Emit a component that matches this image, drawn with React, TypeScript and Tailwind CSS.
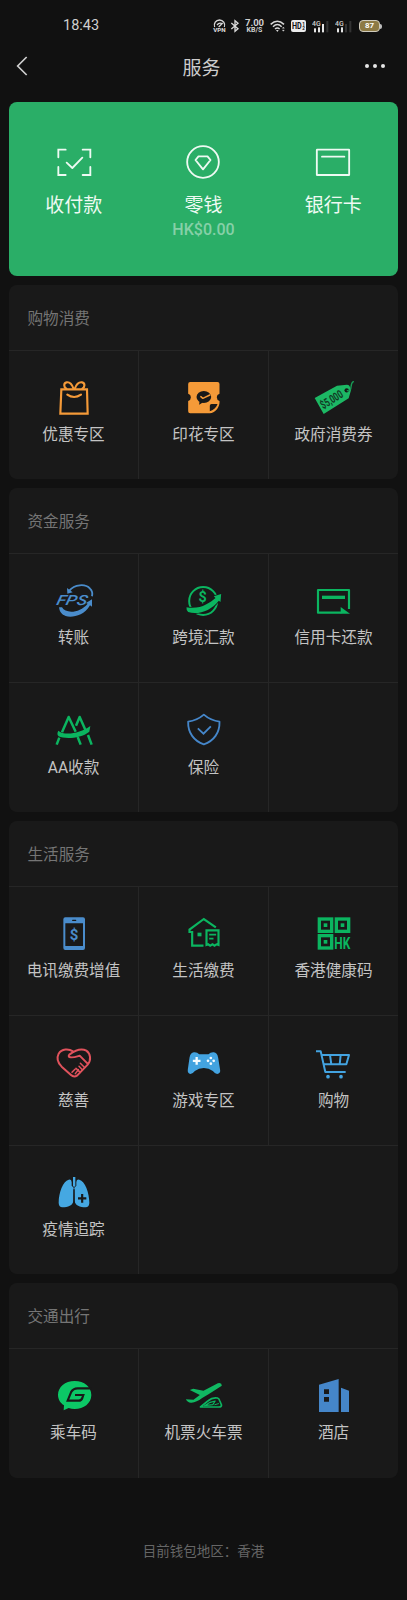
import type { ReactNode } from "react";

const BLUE = "#4586c9";
const SKY = "#43a3e0";
const GREEN = "#0bb560";
const ORANGE = "#f59a38";
const DARK = "#191919";
const FONT = "Roboto, 'Noto Sans CJK SC', sans-serif";

function Icon({ x, y, children }: { x: number; y: number; children: ReactNode }) {
  return (
    <svg
      className="block h-10 w-11 shrink-0 overflow-visible"
      viewBox={`${x} ${y} 132 120`}
      fill="none"
      strokeLinecap="round"
      strokeLinejoin="round"
    >
      {children}
    </svg>
  );
}

const PayIcon = () => (
  <Icon x={155} y={139}>
    <g stroke="#eefaf3" strokeWidth="5.500">
      <path d="M174 185V162H196M247 162H270V185M270 214V238H247M196 238H174V214" strokeLinejoin="miter" />
      <path d="M199 201L216 217L246 186" />
    </g>
  </Icon>
);

const ChangeIcon = () => (
  <Icon x={544.5} y={139}>
    <g stroke="#eefaf3" strokeWidth="5.500">
      <circle cx="610.5" cy="199" r="47.5" />
      <path d="M597 182H624L633 193L610.500 221L588 193Z" />
    </g>
  </Icon>
);

const CardIcon = () => (
  <Icon x={933} y={139}>
    <g stroke="#eefaf3" strokeWidth="5.500">
      <rect x="950.5" y="162" width="97" height="76" rx="1" />
      <path d="M966 183H1033" />
    </g>
  </Icon>
);

const BagIcon = () => (
  <Icon x={155} y={291}>
    <g stroke={ORANGE} strokeWidth="6.500">
      <path d="M183 325H260L262 398H180Z" strokeLinejoin="miter" />
      <path d="M201 341Q221 355 242 341" />
      <path d="M220 324C215 310 206 303 199 304C189 306 190 318 198 323M223 324C228 310 237 303 245 304C255 306 254 318 246 323" />
    </g>
  </Icon>
);

const StampIcon = () => (
  <Icon x={544.5} y={291}>
    <path
      fill={ORANGE}
      d="M569 303H651Q657 303 657 309V338A11.500 11.500 0 0 0 657 360V366C655 382 643 395 628 397H569Q563 397 563 391V360A11.500 11.500 0 0 0 563 338V309Q563 303 569 303Z"
    />
    <ellipse cx="610" cy="348" rx="22" ry="18" fill={DARK} />
    <path d="M597 360L596 371L608 364Z" fill={DARK} />
    <path d="M601 347L607 352L628 342" stroke={ORANGE} strokeWidth="4.500" />
    <path d="M628 391V374Q628 369 633 369H651Q647 384 628 391Z" fill={DARK} />
  </Icon>
);

const VoucherIcon = () => (
  <Icon x={933} y={291}>
    <path fill="#1cb864" d="M941 351L1008 314L1038 311Q1045 311 1047 318L1050 328L1043 352L968 399Z" />
    <circle cx="1037" cy="328" r="6.500" fill={DARK} />
    <path d="M1039 329C1057 333 1044 309 1057 302" stroke="#179c55" strokeWidth="4" />
    <text
      transform="translate(967 385) rotate(-32)"
      fill="#123a24"
      fontFamily="Roboto"
      fontWeight="700"
      fontSize="35"
      textLength="73"
      lengthAdjust="spacingAndGlyphs"
    >
      $5,000
    </text>
  </Icon>
);

const FpsIcon = () => (
  <Icon x={155} y={285}>
    <path d="M207 314C222 295 255 292 269 308C276 315 277 323 275 331" stroke="#4a8ccb" strokeWidth="5.500" strokeLinecap="butt" />
    <path d="M200 306L201 323L217 319Z" fill="#4a8ccb" />
    <path
      fill="#4a8ccb"
      d="M176 364H185C196 384 238 382 262 353L257 351L275 340V362L269 358C250 392 212 395 196 390C184 386 178 378 176 364Z"
    />
    <text
      transform="translate(166 358) skewX(-14)"
      fill="#4a8ccb"
      fontFamily="Roboto"
      fontStyle="italic"
      fontWeight="500"
      fontSize="42"
      textLength="92"
      lengthAdjust="spacingAndGlyphs"
    >
      FPS
    </text>
  </Icon>
);

const RemitIcon = () => (
  <Icon x={544.5} y={285}>
    <circle cx="608" cy="345" r="42" stroke={GREEN} strokeWidth="6" />
    <path
      fill={GREEN}
      stroke={DARK}
      strokeWidth="5"
      paintOrder="stroke"
      d="M558 364C600 371 626 352 645 336L640 331L662 324L660 348L655 344C632 374 592 388 563 378Q557 374 558 364Z"
    />
    <text x="606.5" y="349" textAnchor="middle" fill={GREEN} fontFamily="Roboto" fontWeight="700" fontSize="43">
      $
    </text>
  </Icon>
);

const RepayIcon = () => (
  <Icon x={933} y={285}>
    <path d="M1044 369V312H951V380H1021" stroke={GREEN} strokeWidth="6.500" strokeLinecap="butt" />
    <path d="M963 334H1032" stroke={GREEN} strokeWidth="10" strokeLinecap="butt" />
    <path d="M1019 363L1047 383H1019Z" fill={GREEN} />
  </Icon>
);

const SplitIcon = () => (
  <Icon x={155} y={90}>
    <g stroke={GREEN} strokeWidth="7.500" strokeLinecap="butt" strokeLinejoin="round">
      <path d="M185 154L205 108L226 152" />
      <path d="M227 134L238 108L255 146" />
      <path d="M177 170L169 191M232 168L241 191M263 162L274 191" />
    </g>
    <path fill={GREEN} d="M174 149C190 164 238 159 270 135L267 152C240 174 192 174 175 166Q168 160 174 149Z" />
  </Icon>
);

const ShieldIcon = () => (
  <Icon x={544.5} y={90}>
    <g stroke={BLUE} strokeWidth="5.500">
      <path d="M610 101C596 113 580 120 563 122C562 155 580 180 610 190C640 180 658 155 657 122C640 120 624 113 610 101Z" />
      <path d="M592 142L609 158L631 136" strokeLinecap="butt" strokeLinejoin="miter" />
    </g>
  </Icon>
);

const PhoneIcon = () => (
  <Icon x={155} y={99}>
    <path
      fill="#4a8ccb"
      fillRule="evenodd"
      d="M195 109H248Q254 109 254 115V201Q254 207 248 207H195Q189 207 189 201V115Q189 109 195 109ZM195 127V195H248V127Z"
    />
    <path d="M217 118H226" stroke={DARK} strokeWidth="4" />
    <text x="221.5" y="176" textAnchor="middle" fill="#4a8ccb" fontFamily="Roboto" fontWeight="700" fontSize="45">
      $
    </text>
  </Icon>
);

const HouseIcon = () => (
  <Icon x={544.5} y={99}>
    <g stroke={GREEN} strokeWidth="6.500" strokeLinecap="butt" strokeLinejoin="miter">
      <path d="M646 139L610 114L567 146V153H575V194H609" />
      <path d="M618 192V148H654V192L648 190L642 194L636 190L629 194L623 190Z" />
      <path d="M626 161H647M626 173H639" strokeWidth="5" />
    </g>
    <rect x="591" y="155" width="12" height="11" fill={GREEN} />
  </Icon>
);

const HealthCodeIcon = () => (
  <Icon x={933} y={99}>
    <g stroke={GREEN} strokeWidth="10" strokeLinejoin="miter">
      <rect x="955" y="114" width="37" height="37" />
      <rect x="1006" y="114" width="37" height="37" />
      <rect x="955" y="164" width="37" height="37" />
    </g>
    <g fill={GREEN}>
      <rect x="968" y="127" width="11" height="11" />
      <rect x="1019" y="127" width="11" height="11" />
      <rect x="968" y="177" width="11" height="11" />
      <text x="1000" y="203" fontFamily="Roboto" fontWeight="700" fontSize="52" textLength="48" lengthAdjust="spacingAndGlyphs">
        HK
      </text>
    </g>
  </Icon>
);

const CharityIcon = () => (
  <Icon x={155} y={99}>
    <g stroke="#e0525c" strokeWidth="6">
      <path d="M218 121C205 112 184 113 175 128C168 142 172 155 184 167L212 192Q221 200 231 193L262 161C274 147 270 127 258 119C244 111 224 118 207 131Q202 138 211 139C222 140 231 136 238 134L261 157" />
      <path d="M215 184L224 175M225 188L234 176M236 166L246 176M227 172L240 184M240 157L252 169" strokeWidth="4.500" />
    </g>
  </Icon>
);

const GamepadIcon = () => (
  <Icon x={544.5} y={99}>
    <path
      fill={SKY}
      d="M580 124Q590 123 596 130H624Q630 123 640 124Q650 125 653 140L659 178Q660 188 650 189Q643 188 637 180Q625 171 610 171Q595 171 583 180Q577 188 570 189Q560 188 562 175L567 140Q570 125 580 124Z"
    />
    <path d="M577 149.500H600M588.500 138V161" stroke="#f4fbff" strokeWidth="7" strokeLinecap="butt" />
    <g fill="#f4fbff">
      <circle cx="631" cy="141" r="4" />
      <circle cx="631" cy="158" r="4" />
      <circle cx="622.5" cy="149.5" r="4" />
      <circle cx="639.5" cy="149.5" r="4" />
    </g>
  </Icon>
);

const CartIcon = () => (
  <Icon x={933} y={99}>
    <g stroke={SKY} strokeWidth="6" strokeLinecap="butt">
      <path d="M945 121H959L973 183H1034" />
      <path d="M962 132H1044L1036 160H969M987 132L991 160M1019 132L1016 160" />
    </g>
    <circle cx="981" cy="197" r="5.500" fill={SKY} />
    <circle cx="1020" cy="197" r="5.500" fill={SKY} />
  </Icon>
);

const LungsIcon = () => (
  <Icon x={155} y={487}>
    <g fill="#45a8e2">
      <path d="M205 507Q213 505 214 514V525L220 531L219 570C218 584 203 590 186 590Q176 590 175 577C175 545 188 512 205 507Z" />
      <path d="M237 507Q229 505 228 514V525L222 531L223 570C224 584 239 590 256 590Q266 590 267 577C267 545 254 512 237 507Z" />
      <path d="M218 499H225V526L221 529L218 526Z" />
    </g>
    <path d="M221 536V580" stroke={DARK} strokeWidth="4" strokeLinecap="butt" />
    <path d="M233 563H258M245.500 550V576" stroke={DARK} strokeWidth="6.500" strokeLinecap="butt" />
  </Icon>
);

const RideIcon = () => (
  <Icon x={155} y={316}>
    <path fill="#0cc866" d="M223 331C252 331 273 349 273 373C273 398 250 415 223 415Q213 415 205 412L190 419L191 404C180 397 173 386 173 373C173 349 194 331 223 331Z" />
    <path
      d="M274 353H232Q218 353 212 365L202 390H235Q243 390 246 382L249 373H224"
      stroke={DARK}
      strokeWidth="6.500"
      strokeLinecap="butt"
      strokeLinejoin="miter"
    />
  </Icon>
);

const TravelIcon = () => (
  <Icon x={544.5} y={316}>
    <path
      fill="#10b862"
      d="M568 358L578 354L609 360L652 338Q664 335 664 345L624 371L605 382Q588 395 573 396Q562 397 556 386L579 387L598 373Z"
    />
    <path d="M600 409L622 391Q636 379 651 382Q656 384 658 391L663 403Q663 409 655 409Z" stroke={DARK} strokeWidth="11" />
    <path d="M600 409L622 391Q636 379 651 382Q656 384 658 391L663 403Q663 409 655 409Z" fill={DARK} stroke={GREEN} strokeWidth="5" />
    <path d="M612 405L629 395L644 391L637 402Z" stroke={GREEN} strokeWidth="3.500" />
    <path d="M643 402L654 399" stroke={GREEN} strokeWidth="3" />
  </Icon>
);

const HotelIcon = () => (
  <Icon x={933} y={316}>
    <path
      fill={BLUE}
      fillRule="evenodd"
      d="M954 342L1013 325V424H954ZM969 356V370H984V356ZM969 379V393H984V379ZM1020 351L1044 360V424H1020Z"
    />
  </Icon>
);

type Item = { label: string; icon: () => ReactNode };

const wallet: (Item & { note?: string })[] = [
  { label: "收付款", icon: PayIcon },
  { label: "零钱", icon: ChangeIcon, note: "HK$0.00" },
  { label: "银行卡", icon: CardIcon },
];

const sections: { title: string; items: Item[]; filler?: string }[] = [
  {
    title: "购物消费",
    items: [
      { label: "优惠专区", icon: BagIcon },
      { label: "印花专区", icon: StampIcon },
      { label: "政府消费券", icon: VoucherIcon },
    ],
  },
  {
    title: "资金服务",
    items: [
      { label: "转账", icon: FpsIcon },
      { label: "跨境汇款", icon: RemitIcon },
      { label: "信用卡还款", icon: RepayIcon },
      { label: "AA收款", icon: SplitIcon },
      { label: "保险", icon: ShieldIcon },
    ],
    filler: "border-t border-[#262626]",
  },
  {
    title: "生活服务",
    items: [
      { label: "电讯缴费增值", icon: PhoneIcon },
      { label: "生活缴费", icon: HouseIcon },
      { label: "香港健康码", icon: HealthCodeIcon },
      { label: "慈善", icon: CharityIcon },
      { label: "游戏专区", icon: GamepadIcon },
      { label: "购物", icon: CartIcon },
      { label: "疫情追踪", icon: LungsIcon },
    ],
    filler: "col-span-2 border-t border-[#262626]",
  },
  {
    title: "交通出行",
    items: [
      { label: "乘车码", icon: RideIcon },
      { label: "机票火车票", icon: TravelIcon },
      { label: "酒店", icon: HotelIcon },
    ],
  },
];

function Signal({ strong }: { strong?: boolean }) {
  return (
    <svg className="block h-[13px] w-[17px]" viewBox="0 0 51 39">
      <text x="0" y="17" fill="#cfcfcf" fontFamily="Roboto" fontWeight="500" fontSize="21" textLength="26" lengthAdjust="spacingAndGlyphs">
        4G
      </text>
      <g fill="#e6e6e6">
        <rect x="6" y="25" width="6" height="12" />
        <rect x="18" y="22" width="6" height="15" />
        <rect x="30" y="12" width="6" height="25" fill={strong ? "#e6e6e6" : "#333"} />
        <rect x="43" y="3" width="6" height="34" fill="#333" />
      </g>
    </svg>
  );
}

function StatusBar() {
  return (
    <div className="flex h-[52px] items-center pr-[25px] pl-[63px] text-[#d0d0d0]">
      <span className="pt-px text-[14.500px] leading-none">18:43</span>
      <div className="ml-auto flex items-center">
        <svg className="block h-[14px] w-[13px] overflow-visible" viewBox="0 0 39 42" fill="none" stroke="#d8d8d8" strokeWidth="4">
          <path d="M5 24A15.500 15.500 0 1 1 34 24M12 18Q19 9 27 14M17 24L29 12" />
          <text x="1" y="39" stroke="none" fill="#e0e0e0" fontFamily="Roboto" fontWeight="700" fontSize="18" textLength="37" lengthAdjust="spacingAndGlyphs">
            VPN
          </text>
        </svg>
        <svg className="ml-[4px] block h-[14px] w-[10px]" viewBox="0 0 30 42" fill="none" stroke="#d8d8d8" strokeWidth="4">
          <path d="M4 12L24 29L15 37V5L24 13L4 30" />
        </svg>
        <div className="ml-[5px] flex w-[19px] flex-col items-center font-bold">
          <span className="text-[9.500px] leading-[8px]">7.00</span>
          <span className="text-[7px] leading-[7px]">KB/S</span>
        </div>
        <svg className="ml-[6px] block h-[14px] w-[16px]" viewBox="0 0 48 42" fill="none" stroke="#d8d8d8" strokeWidth="4.500">
          <path d="M2 16Q22 -3 42 16M9 23Q22 10 35 23M15 30Q22 24 29 30" />
          <path d="M18 33L22 39L26 33Z" fill="#d8d8d8" stroke="none" />
          <path d="M37 28L40 24L43 28ZM37 33L40 37L43 33Z" fill="#d8d8d8" strokeWidth="1" />
        </svg>
        <svg className="ml-[5px] block h-[12px] w-[15px]" viewBox="0 0 45 36">
          <rect width="45" height="36" rx="6" fill="#ececec" />
          <text x="3" y="27" fill="#111" fontFamily="Roboto" fontWeight="700" fontSize="25" textLength="29" lengthAdjust="spacingAndGlyphs">
            HD
          </text>
          <text x="34" y="17" fill="#111" fontFamily="Roboto" fontWeight="700" fontSize="14">
            1
          </text>
          <text x="34" y="31" fill="#111" fontFamily="Roboto" fontWeight="700" fontSize="14">
            2
          </text>
        </svg>
        <div className="ml-[6px]">
          <Signal strong />
        </div>
        <div className="ml-[6px]">
          <Signal />
        </div>
        <div className="ml-[7px] flex h-[12px] w-[21px] items-center justify-center rounded-[4px] border border-[#cfcbbd] bg-[#8d7a45] text-[8px] leading-none font-bold text-white">
          87
        </div>
        <div className="h-[5px] w-[2px] rounded-r-sm bg-[#bdbdbd]" />
      </div>
    </div>
  );
}

function NavBar() {
  return (
    <div className="flex h-[50px] items-start justify-between pt-[4px] pr-[22px] pl-[16px]">
      <svg className="block h-[20px] w-[22px]" viewBox="0 0 66 60" fill="none" stroke="#cfcfcf" strokeWidth="5">
        <path d="M32 3L5 30L32 57" />
      </svg>
      <h1 className="mt-[2px] text-[19px] leading-[22px] text-[#cdcdcd]">服务</h1>
      <div className="flex h-[20px] items-center gap-[4px]">
        <span className="size-[4px] rounded-full bg-[#e6e6e6]" />
        <span className="size-[4px] rounded-full bg-[#e6e6e6]" />
        <span className="size-[4px] rounded-full bg-[#e6e6e6]" />
      </div>
    </div>
  );
}

export default function App() {
  return (
    <div className="min-h-[1600px] w-[407px] bg-[#111111]" style={{ fontFamily: FONT }}>
      <StatusBar />
      <NavBar />
      <main className="flex flex-col gap-[9px] px-[9px]">
        <div className="grid h-[174px] grid-cols-3 rounded-[8px] bg-[#2aae67] pt-[40px]">
          {wallet.map(({ label, icon: Glyph, note }) => (
            <div key={label} className="flex flex-col items-center">
              <Glyph />
              <span className="mt-[13px] text-[19px] leading-[22px] text-[#eefaf3]">{label}</span>
              {note && <span className="mt-[3px] text-[16px] leading-[20px] font-medium text-[#86d0a7]">{note}</span>}
            </div>
          ))}
        </div>
        {sections.map(({ title, items, filler }) => (
          <section key={title} className="overflow-hidden rounded-[8px] bg-[#191919]">
            <h2 className="flex h-[64.600px] items-center pt-[5px] pl-[18.500px] text-[15.600px] leading-none text-[#757575]">{title}</h2>
            <div className="grid grid-cols-[130px_130px_1fr]">
              {items.map(({ label, icon: Glyph }, i) => (
                <div
                  key={label}
                  className={
                    i % 3 === 2
                      ? "flex h-[129.600px] flex-col items-center border-t border-[#262626] pt-[27.400px]"
                      : "flex h-[129.600px] flex-col items-center border-t border-r border-[#262626] pt-[27.400px]"
                  }
                >
                  <Glyph />
                  <span className="mt-[7px] text-[15.600px] leading-[20px] whitespace-nowrap text-[#c4c4c4]">{label}</span>
                </div>
              ))}
              {filler && <div className={filler} />}
            </div>
          </section>
        ))}
      </main>
      <p className="mt-[63px] text-center text-[13.500px] leading-[20px] text-[#666666]">目前钱包地区：香港</p>
    </div>
  );
}
